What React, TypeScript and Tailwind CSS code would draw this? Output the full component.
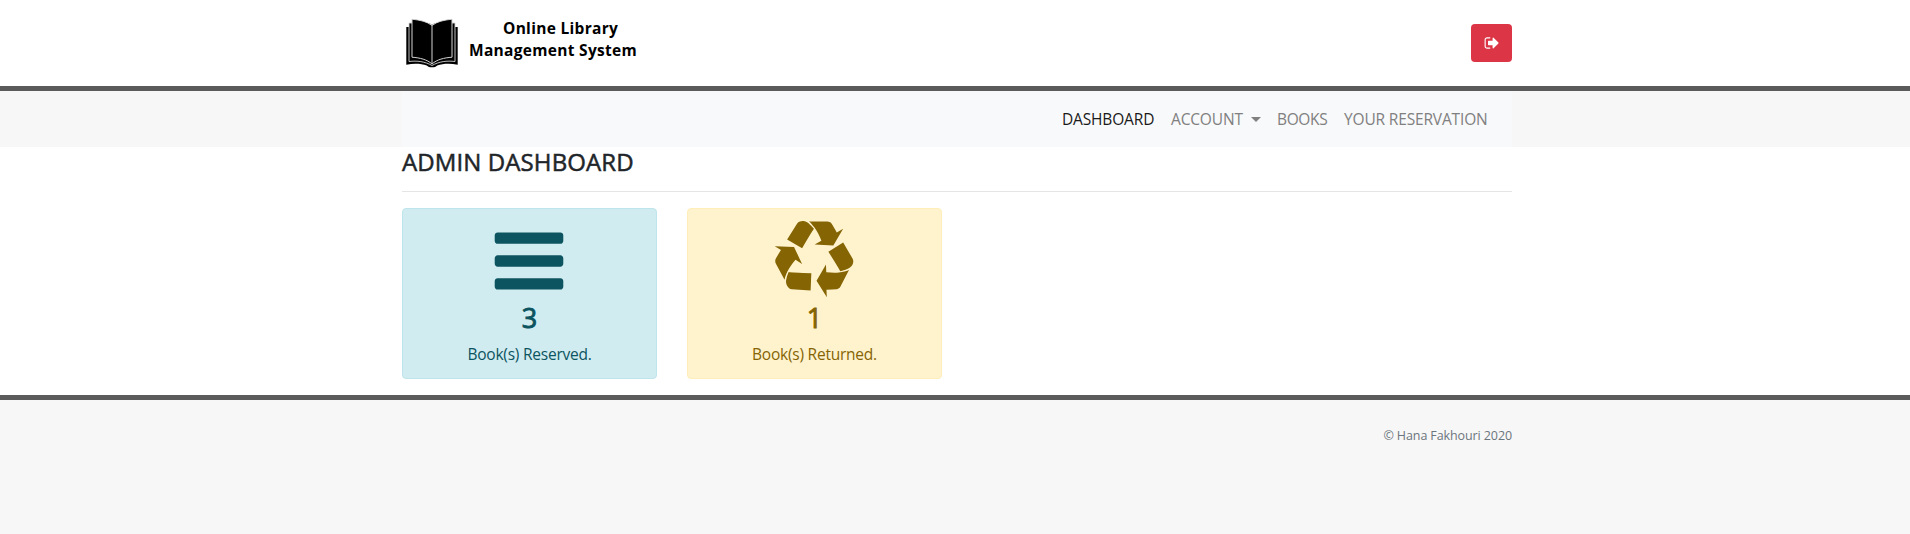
import React from "react";

function Caret() {
  return <span className="mb-[1px] ml-[8px] inline-block h-0 w-0 border-x-[5px] border-t-[5px] border-x-transparent border-t-[#808080]" />;
}

function BookLogo() {
  return (
    <svg width="56" height="54" viewBox="0 0 56 54" className="shrink-0">
      <path d="M2.3 11H53.7v37.7c-8-1.4-15-1-20.5.8-1 1.4-3 1.8-5.2 1.8s-4.2-.4-5.2-1.8c-5.500-1.800-12.500-2.200-20.500-.8z" fill="#000" />
      <path d="M5 7h46v38.500c-8-1-16 0-23 4C21 45.500 13 44.500 5 45.500z" fill="#000" stroke="#d4d4d4" strokeWidth="0.9" />
      <path d="M8 3.200C16 4 23 5.500 28 9.500c5-4 12-5.500 20-6.300v38C40 41.800 33 43.500 28 48c-5-4.500-12-6.200-20-6.800z" fill="#000" stroke="#d4d4d4" strokeWidth="1" />
      <path d="M28 9.500V47" stroke="#d4d4d4" strokeWidth="1" />
      <path d="M7 2.500C16 3.300 23 5 28 9c5-4 12-5.700 21-6.500V0H7z" fill="#fff" />
    </svg>
  );
}

function SignOutIcon() {
  return (
    <svg width="16" height="16" viewBox="0 0 1792 1792" fill="currentColor">
      <path d="M704 1440q0 4 1 20t.5 26.5-3 23.5-10 19.5-20.5 6.5h-320q-119 0-203.5-84.5t-84.5-203.5v-704q0-119 84.5-203.5t203.5-84.5h320q13 0 22.5 9.5t9.5 22.5q0 4 1 20t.5 26.5-3 23.5-10 19.5-20.5 6.5h-320q-66 0-113 47t-47 113v704q0 66 47 113t113 47h312l11.5 1 11.5 3 8 5.5 7 9 2 13.5zm928-544q0 26-19 45l-544 544q-19 19-45 19t-45-19-19-45v-288h-448q-26 0-45-19t-19-45v-384q0-26 19-45t45-19h448v-288q0-26 19-45t45-19 45 19l544 544q19 19 19 45z" />
    </svg>
  );
}

function BarsIcon() {
  return (
    <svg width="80" height="80" viewBox="0 0 1792 1792" fill="currentColor" className="mr-[1px]">
      <path d="M1664 1344v128q0 26-19 45t-45 19h-1408q-26 0-45-19t-19-45v-128q0-26 19-45t45-19h1408q26 0 45 19t19 45zm0-512v128q0 26-19 45t-45 19h-1408q-26 0-45-19t-19-45v-128q0-26 19-45t45-19h1408q26 0 45 19t19 45zm0-512v128q0 26-19 45t-45 19h-1408q-26 0-45-19t-19-45v-128q0-26 19-45t45-19h1408q26 0 45 19t19 45z" />
    </svg>
  );
}

function RecycleIcon() {
  return (
    <svg width="80" height="80" viewBox="0 0 1792 1792" fill="currentColor" className="mr-[1px]">
      <path d="M836 1169l-15 368-2 22-420-29q-36-3-67-31.5t-47-65.5q-11-27-14.5-55t4-65 12-55 21.5-64 19-53q78 12 509 28zm-387-586l180 379-147-92q-63 72-111.5 144.5t-72.5 125-39.5 94.500-18.500 63l-4 21-190-357q-17-26-18-56t6-47l8-18q35-63 114-188l-140-86zm1231 517l-188 359q-12 29-36.500 46.500t-43.500 20.500l-18 4q-71 7-219 12l8 164-230-367 211-362 7 173q170 16 283 5t170-33zm-785-924q-47 63-265 435l-317-187-19-12 225-356q20-31 60-45t80-10q24 2 48.500 12t42 21 41.500 33 36 34.500 36 39.500 32 35zm655 307l212 363q18 37 12.500 76t-27.500 74q-13 20-33 37t-38 28-48.500 22-47 16-51.500 14-46 12q-34-72-265-436l313-195zm-143-226l142-83-220 373-419-20 151-86q-34-89-75-166t-75.500-123.500-64.500-80-47-46.500l-17-13 405 1q31-3 58 10.500t39 28.500l11 15q39 61 112 190z" />
    </svg>
  );
}

function StatCard({ icon, count, label, tone }: { icon: React.ReactNode; count: number; label: string; tone: string }) {
  return (
    <div className={`flex h-[171px] w-[255px] flex-col items-center rounded border pt-3 ${tone}`}>
      {icon}
      <h3 className="text-[27px] leading-[34px] [-webkit-text-stroke:0.9px]">{count}</h3>
      <p className="mt-[7px] text-[15.5px] leading-6 tracking-[-0.23px] whitespace-nowrap">{label}</p>
    </div>
  );
}

export default function App() {
  return (
    <div className="h-[534px] w-full bg-white font-['Open_Sans','Noto_Sans',sans-serif] text-[#212529]">
      <header className="h-[91px] border-b-[5px] border-[#5b5b5b] pl-1">
        <div className="mx-auto flex h-[86px] w-[1110px] justify-between">
          <div className="flex pt-[16px] pl-[2px]">
            <BookLogo />
            <div className="ml-[9px] w-[168px] pt-px text-[15.5px] leading-[22px] font-bold tracking-[0.3px] whitespace-nowrap text-black">
              <div className="pl-[34px]">Online Library</div>
              <div>Management System</div>
            </div>
          </div>
          <button className="mt-6 flex h-[38px] w-[41px] items-center justify-center rounded bg-[#dc3545] text-white">
            <SignOutIcon />
          </button>
        </div>
      </header>
      <nav className="h-14 bg-[#f7f7f7] pl-1">
        <div className="mx-auto flex h-14 w-[1110px] items-center justify-end bg-[#f8f9fa] pt-[2px] pr-4 text-[15.5px] tracking-[-0.16px] whitespace-nowrap text-[#808080]">
          <a className="w-[109px] text-[#1a1a1a]">DASHBOARD</a>
          <a className="flex w-[106px] items-center">ACCOUNT<Caret /></a>
          <a className="w-[67px] tracking-[-0.35px]">BOOKS</a>
          <a className="w-[152px]">YOUR RESERVATION</a>
        </div>
      </nav>
      <main className="h-[248px] pl-1">
        <div className="mx-auto w-[1110px]">
          <h4 className="h-11 text-[24px] leading-[29px] tracking-[0.1px] [-webkit-text-stroke:0.5px]">ADMIN DASHBOARD</h4>
          <hr className="border-t border-[#e5e5e5]" />
          <div className="mt-4 flex gap-[30px]">
            <StatCard icon={<BarsIcon />} count={3} label="Book(s) Reserved." tone="border-[#bee5eb] bg-[#d1ecf1] text-[#0c5460]" />
            <StatCard icon={<RecycleIcon />} count={1} label="Book(s) Returned." tone="border-[#ffeeba] bg-[#fff3cd] text-[#856404]" />
          </div>
        </div>
      </main>
      <footer className="h-[139px] border-t-[5px] border-[#5b5b5b] bg-[#f7f7f7] pl-1">
        <div className="mx-auto w-[1110px] pt-[26px] text-right text-[12.5px] leading-5 tracking-[-0.1px] text-[#6c757d]">© Hana Fakhouri 2020</div>
      </footer>
    </div>
  );
}
